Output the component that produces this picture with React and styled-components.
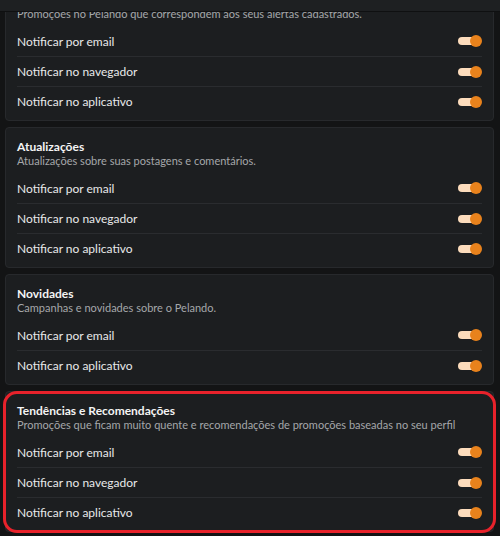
import React, { useState } from 'react'
import styled, { createGlobalStyle } from 'styled-components'

const GlobalStyle = createGlobalStyle`
  html, body {
    margin: 0;
    padding: 0;
    background: #131415;
  }
  * { box-sizing: border-box; }
`

const Page = styled.div`
  width: 500px;
  height: 536px;
  overflow: hidden;
  background: #131415;
  font-family: Lato, "Open Sans", sans-serif;
  display: flex;
  flex-direction: column;
`

const TopBar = styled.div`
  flex: none;
  height: 12px;
  background: #1e2022;
  border-bottom: 1px solid #0f1011;
  position: relative;
  z-index: 2;
`

const List = styled.div`
  display: flex;
  flex-direction: column;
  gap: 6px;
  padding: 0 6px 0 5px;
  margin-top: -17px;
`

const Card = styled.section`
  position: relative;
  background: #1c1e20;
  border: 1px solid #27292c;
  border-radius: 4px;
  padding: 11px 11px 4px 11px;

  ${p => p.$highlight && `
    &::after {
      content: '';
      position: absolute;
      inset: -1px -3px -2px -3px;
      border: 3.5px solid #e8222b;
      border-radius: 14px;
      pointer-events: none;
    }
  `}
`

const Title = styled.h3`
  margin: 0;
  font-size: 12px;
  line-height: 15px;
  font-weight: 700;
  color: #f4f4f4;
`

const Description = styled.p`
  margin: 0 0 5px;
  font-size: 11px;
  line-height: 14px;
  color: #a5a7aa;
  white-space: nowrap;
`

const Row = styled.div`
  height: 30px;
  display: flex;
  align-items: center;
  justify-content: space-between;
  border-top: ${p => (p.$first ? 'none' : '1px solid #2a2c2f')};
  font-size: 12px;
  color: #e8e9ea;
`

const Track = styled.button`
  position: relative;
  width: 24px;
  height: 12px;
  padding: 0;
  border: none;
  background: none;
  cursor: pointer;

  &::before {
    content: '';
    position: absolute;
    left: 0;
    top: 2px;
    width: 20px;
    height: 8px;
    border-radius: 4px;
    background: ${p => (p.$on ? '#fcdcbc' : '#55585c')};
  }

  &::after {
    content: '';
    position: absolute;
    top: 0;
    left: ${p => (p.$on ? '12px' : '0')};
    width: 12px;
    height: 12px;
    border-radius: 50%;
    background: ${p => (p.$on ? '#e8821c' : '#c9cbcd')};
  }
`

const Toggle = ({ initial = true }) => {
  const [on, setOn] = useState(initial)
  return <Track $on={on} onClick={() => setOn(!on)} aria-pressed={on} />
}

// the first block is scrolled under the top bar, only its description shows
const sections = [
  {
    description: 'Promoções no Pelando que correspondem aos seus alertas cadastrados.',
    rows: ['Notificar por email', 'Notificar no navegador', 'Notificar no aplicativo'],
  },
  {
    title: 'Atualizações',
    description: 'Atualizações sobre suas postagens e comentários.',
    rows: ['Notificar por email', 'Notificar no navegador', 'Notificar no aplicativo'],
  },
  {
    title: 'Novidades',
    description: 'Campanhas e novidades sobre o Pelando.',
    rows: ['Notificar por email', 'Notificar no aplicativo'],
  },
  {
    title: 'Tendências e Recomendações',
    description: 'Promoções que ficam muito quente e recomendações de promoções baseadas no seu perfil',
    rows: ['Notificar por email', 'Notificar no navegador', 'Notificar no aplicativo'],
    highlight: true,
  },
]

export default function App() {
  return (
    <>
      <GlobalStyle />
      <Page>
        <TopBar />
        <List>
          {sections.map(s => (
            <Card key={s.description} $highlight={s.highlight}>
              {s.title && <Title>{s.title}</Title>}
              <Description>{s.description}</Description>
              {s.rows.map((label, i) => (
                <Row key={label} $first={i === 0}>
                  <span>{label}</span>
                  <Toggle />
                </Row>
              ))}
            </Card>
          ))}
        </List>
      </Page>
    </>
  )
}
